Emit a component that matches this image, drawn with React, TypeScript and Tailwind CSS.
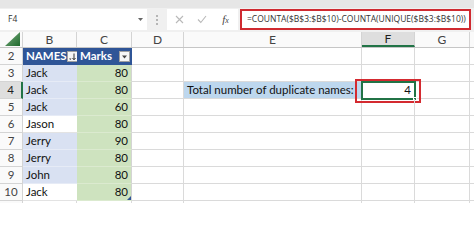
import React from 'react';

type Row = { n: number; name: string; mark: number; blue: boolean };

const rows: Row[] = [
  { n: 3, name: 'Jack', mark: 80, blue: true },
  { n: 4, name: 'Jack', mark: 80, blue: true },
  { n: 5, name: 'Jack', mark: 60, blue: true },
  { n: 6, name: 'Jason', mark: 80, blue: false },
  { n: 7, name: 'Jerry', mark: 90, blue: true },
  { n: 8, name: 'Jerry', mark: 80, blue: true },
  { n: 9, name: 'John', mark: 80, blue: true },
  { n: 10, name: 'Jack', mark: 80, blue: false },
];

function FilterBtn({ sorted }: { sorted?: boolean }) {
  return (
    <div className="w-[11px] h-[11px] shrink-0 bg-[#f6f6f6] border border-[#a0a0a0] flex items-center justify-center">
      {sorted ? (
        <svg width="9" height="9" viewBox="0 0 9 9">
          <path d="M1 6.5 L3.5 6.5 L2.25 8 Z" fill="#333" />
          <path d="M6 1.5 V7.5 M4.5 6 L6 7.8 L7.5 6" stroke="#333" strokeWidth="1" fill="none" />
        </svg>
      ) : (
        <svg width="9" height="9" viewBox="0 0 9 9">
          <path d="M2 3.5 L7 3.5 L4.5 6.5 Z" fill="#444" />
        </svg>
      )}
    </div>
  );
}

function ColHeader({ label, w, selected }: { label: string; w: string; selected?: boolean }) {
  return (
    <div
      className={`${w} shrink-0 h-full flex items-center justify-center border-r border-[#d4d4d4] ${
        selected ? 'bg-[#dedede] border-b-2 border-b-[#217346] text-[#1f1f1f]' : 'text-[#444]'
      }`}
    >
      <span className="text-[12px] leading-none">{label}</span>
    </div>
  );
}

export default function App() {
  return (
    <div className="w-[474px] h-[203px] overflow-hidden bg-white font-['Lato',sans-serif] text-black select-none">
      {/* top strip */}
      <div className="h-[8px] bg-[#e6e6e6]" />
      {/* formula bar */}
      <div className="flex h-[24px] bg-[#f0f0f0] items-start pt-[1px]">
        <div className="w-[147px] shrink-0 h-[21px] bg-white flex items-center justify-between pl-[8px] pr-[3px] font-['Open_Sans',sans-serif] text-[8.5px] text-[#333]">
          <span>F4</span>
          <svg width="7" height="5" viewBox="0 0 7 5">
            <path d="M1 1 L6 1 L3.5 4 Z" fill="#666" />
          </svg>
        </div>
        <div className="w-[20px] shrink-0 h-[21px] flex flex-col items-center justify-center gap-[2px]">
          <div className="w-[2px] h-[2px] bg-[#b5b5b5]" />
          <div className="w-[2px] h-[2px] bg-[#b5b5b5]" />
          <div className="w-[2px] h-[2px] bg-[#b5b5b5]" />
        </div>
        <div className="w-[71px] shrink-0 h-[21px] bg-white flex items-center">
          <div className="w-[24px] flex justify-center">
            <svg width="9" height="9" viewBox="0 0 9 9">
              <path d="M1 1 L8 8 M8 1 L1 8" stroke="#b9b9b9" strokeWidth="1.1" />
            </svg>
          </div>
          <div className="w-[22px] flex justify-center">
            <svg width="10" height="9" viewBox="0 0 10 9">
              <path d="M1 4.5 L3.8 7.5 L9 1" stroke="#b9b9b9" strokeWidth="1.1" fill="none" />
            </svg>
          </div>
          <div className="w-[25px] flex justify-center">
            <span className="font-['Liberation_Serif',serif] italic text-[11px] text-[#444] leading-none">
              f<span className="text-[8px]">x</span>
            </span>
          </div>
        </div>
        <div className="w-[2px] shrink-0" />
        <div className="w-[231px] shrink-0 h-[21px] bg-white border-2 border-[#cf2a30] flex items-center pl-[5px] font-['Open_Sans',sans-serif] text-[8.5px] text-[#333] whitespace-nowrap overflow-hidden">
          =COUNTA($B$3:$B$10)-COUNTA(UNIQUE($B$3:$B$10))
        </div>
      </div>

      {/* column headers */}
      <div className="flex h-[16px] bg-[#fafafa] border-b border-[#c6c6c6]">
        <div className="w-[23px] shrink-0 h-full border-r border-[#d4d4d4] flex items-end justify-end pr-[2px] pb-[1px]">
          <svg width="15" height="14" viewBox="0 0 15 14">
            <defs>
              <linearGradient id="tri" x1="0" y1="0" x2="1" y2="1">
                <stop offset="0" stopColor="#7fae83" />
                <stop offset="1" stopColor="#1f6a2c" />
              </linearGradient>
            </defs>
            <path d="M15 0 L15 14 L0 14 Z" fill="url(#tri)" />
          </svg>
        </div>
        <ColHeader label="B" w="w-[54px]" />
        <ColHeader label="C" w="w-[55px]" />
        <ColHeader label="D" w="w-[52px]" />
        <ColHeader label="E" w="w-[178px]" />
        <ColHeader label="F" w="w-[53px]" selected />
        <ColHeader label="G" w="w-[55px]" />
        <div className="flex-1" />
      </div>

      {/* row 2 - table header */}
      <div className="flex h-[17px]">
        <div className="w-[23px] shrink-0 border-r border-b border-[#d4d4d4] bg-[#fafafa] flex items-center justify-center text-[11.5px] text-[#444]">
          2
        </div>
        <div className="w-[54px] shrink-0 bg-[#2f5597] border-b border-[#2f5597] flex items-center justify-between pl-[3px] pr-[1px]">
          <span className="text-[11.5px] font-bold text-white">NAMES</span>
          <FilterBtn sorted />
        </div>
        <div className="w-[55px] shrink-0 bg-[#2f5597] border-r border-b border-[#2f5597] flex items-center justify-between pl-[3px] pr-[1px]">
          <span className="text-[11.5px] font-bold text-white">Marks</span>
          <FilterBtn />
        </div>
        <div className="w-[52px] shrink-0 border-r border-b border-[#dadada]" />
        <div className="w-[178px] shrink-0 border-r border-b border-[#dadada]" />
        <div className="w-[53px] shrink-0 border-r border-b border-[#dadada]" />
        <div className="w-[55px] shrink-0 border-r border-b border-[#dadada]" />
        <div className="flex-1 border-b border-[#dadada]" />
      </div>

      {rows.map((r) => {
        const sel = r.n === 4;
        return (
          <div key={r.n} className="flex h-[17px]">
            <div
              className={`w-[23px] shrink-0 border-b border-[#d4d4d4] flex items-center justify-center text-[11.5px] ${
                sel ? 'bg-[#dedede] border-r-2 border-r-[#217346] text-[#1f1f1f]' : 'bg-[#fafafa] border-r text-[#444]'
              }`}
            >
              {r.n}
            </div>
            <div
              className={`w-[54px] shrink-0 border-b flex items-center pl-[3px] text-[11.5px] text-[#111] ${
                r.blue ? 'bg-[#d9e1f2] border-[#e6ebf6]' : 'bg-white border-[#e3e3e3]'
              }`}
            >
              {r.name}
            </div>
            <div className="w-[55px] shrink-0 bg-[#cee3bf] border-b border-b-[#dbeacf] border-r border-r-[#d4d4d4] flex items-center justify-end pr-[3px] text-[11.5px] text-[#111] relative">
              {r.mark}
              {r.n === 10 && (
                <svg className="absolute right-[0px] bottom-[0px]" width="4" height="4" viewBox="0 0 4 4">
                  <path d="M4 0 L4 4 L0 4 Z" fill="#2f5597" />
                </svg>
              )}
            </div>
            <div className="w-[52px] shrink-0 border-r border-b border-[#dadada]" />
            <div
              className={`w-[178px] shrink-0 border-r border-b border-[#dadada] flex items-center pl-[3px] text-[11.5px] text-[#111] whitespace-nowrap ${
                sel ? 'bg-[#bdd7ee]' : ''
              }`}
            >
              {sel ? 'Total number of duplicate names:' : ''}
            </div>
            <div className="w-[53px] shrink-0 border-r border-b border-[#dadada] relative flex items-center justify-end pr-[3px] text-[11.5px] text-[#111]">
              {sel && (
                <>
                  4
                  <div className="absolute -left-[1px] -top-[1px] w-[55px] h-[19px] border-2 border-[#217346]" />
                  <div className="absolute -right-[3px] -bottom-[3px] w-[4px] h-[4px] bg-[#217346] border border-white" />
                  <div className="absolute -left-[7px] -top-[3px] w-[66px] h-[24px] border-2 border-[#d42a30]" />
                </>
              )}
            </div>
            <div className="w-[55px] shrink-0 border-r border-b border-[#dadada]" />
            <div className="flex-1 border-b border-[#dadada]" />
          </div>
        );
      })}

      {/* row 11 partial */}
      <div className="flex h-[17px]">
        <div className="w-[23px] shrink-0 border-r border-[#d4d4d4] bg-[#fafafa]" />
        <div className="w-[54px] shrink-0 border-r border-[#dadada]" />
        <div className="w-[55px] shrink-0 border-r border-[#dadada]" />
        <div className="w-[52px] shrink-0 border-r border-[#dadada]" />
        <div className="w-[178px] shrink-0 border-r border-[#dadada]" />
        <div className="w-[53px] shrink-0 border-r border-[#dadada]" />
        <div className="w-[55px] shrink-0 border-r border-[#dadada]" />
      </div>
    </div>
  );
}
